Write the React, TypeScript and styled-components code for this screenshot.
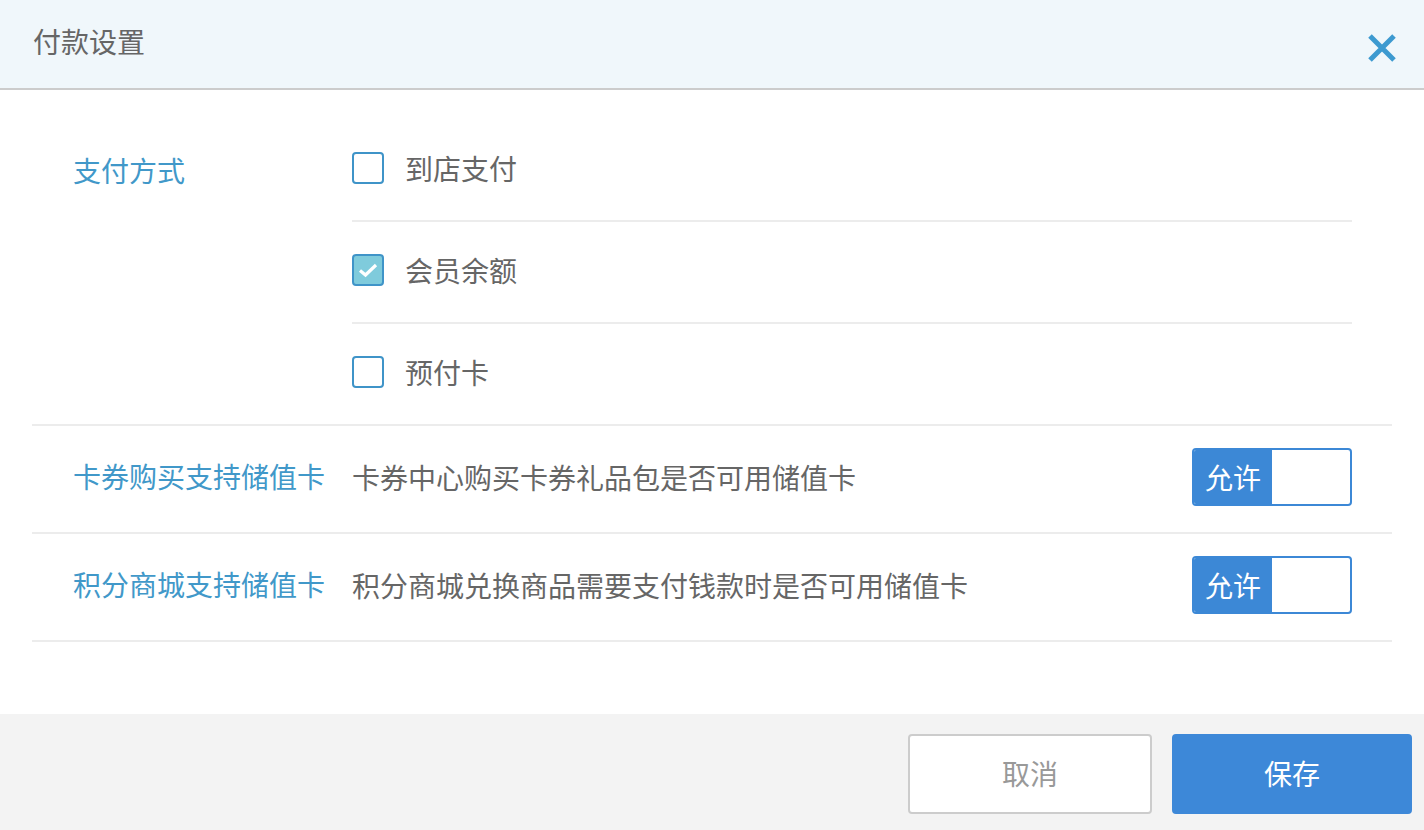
import styled, { createGlobalStyle } from 'styled-components';

const GlobalStyle = createGlobalStyle`
  html, body {
    margin: 0;
    padding: 0;
    background: #fff;
  }
  body {
    font-family: "Noto Sans CJK SC", "Noto Sans", sans-serif;
  }
  * {
    box-sizing: border-box;
  }
`;

const Modal = styled.div`
  display: flex;
  flex-direction: column;
  width: 1424px;
  height: 830px;
  background: #fff;
`;

const Header = styled.div`
  display: flex;
  align-items: center;
  justify-content: space-between;
  height: 90px;
  padding: 0 27px 7px 33px;
  background: #f0f7fb;
  border-bottom: 2px solid #cccccc;
`;

const Title = styled.h1`
  margin: 0;
  font-size: 28px;
  font-weight: 400;
  color: #666;
  line-height: 1;
`;

const CloseButton = styled.button`
  display: flex;
  padding: 0;
  border: 0;
  background: none;
  cursor: pointer;
  margin-top: 14px;
`;

const Body = styled.div`
  flex: 1;
  padding: 30px 32px 0;
`;

const Section = styled.div<{ $center?: boolean }>`
  display: flex;
  align-items: ${props => (props.$center ? 'center' : 'flex-start')};
  min-height: ${props => (props.$center ? '108px' : 'auto')};
  padding-bottom: ${props => (props.$center ? '4px' : '0')};
  border-bottom: 2px solid #ececec;
`;

const Label = styled.div<{ $offset?: number }>`
  width: 320px;
  flex-shrink: 0;
  padding-left: 41px;
  padding-top: ${props => props.$offset ?? 0}px;
  font-size: 28px;
  line-height: 1.4;
  color: #4198c9;
`;

const Options = styled.div`
  flex: 1;
  padding-right: 40px;
`;

const OptionRow = styled.label<{ $last?: boolean }>`
  display: flex;
  align-items: center;
  gap: 21px;
  height: ${props => (props.$last ? '100px' : '102px')};
  padding-bottom: 4px;
  border-bottom: ${props => (props.$last ? 'none' : '2px solid #ececec')};
  font-size: 28px;
  color: #666;
  cursor: pointer;
`;

const Box = styled.span<{ $checked?: boolean }>`
  display: flex;
  align-items: center;
  justify-content: center;
  width: 32px;
  height: 32px;
  border: 2px solid #3f94c8;
  border-radius: 4px;
  background: ${props => (props.$checked ? '#7fcbdc' : '#fff')};
`;

const Description = styled.div`
  flex: 1;
  font-size: 28px;
  color: #666;
`;

const Toggle = styled.div`
  display: flex;
  width: 160px;
  height: 58px;
  margin-right: 40px;
  border: 2px solid #3c88d6;
  border-radius: 4px;
  overflow: hidden;
  background: #fff;
`;

const ToggleOn = styled.span`
  display: flex;
  align-items: center;
  justify-content: center;
  width: 78px;
  background: #3c88d6;
  color: #fff;
  font-size: 28px;
`;

const Footer = styled.div`
  display: flex;
  justify-content: flex-end;
  align-items: flex-start;
  gap: 20px;
  height: 116px;
  padding: 20px 12px 0 0;
  background: #f3f3f3;
`;

const Button = styled.button<{ $primary?: boolean }>`
  width: ${props => (props.$primary ? '240px' : '244px')};
  height: 80px;
  padding-bottom: 3px;
  border: 2px solid ${props => (props.$primary ? '#3d88d8' : '#cccccc')};
  border-radius: 4px;
  background: ${props => (props.$primary ? '#3d88d8' : '#fff')};
  color: ${props => (props.$primary ? '#fff' : '#999')};
  font-family: "Noto Sans CJK SC", sans-serif;
  font-size: 28px;
  cursor: pointer;
`;

const payMethods = [
  { name: '到店支付', checked: false },
  { name: '会员余额', checked: true },
  { name: '预付卡', checked: false },
];

const cardRules = [
  { label: '卡券购买支持储值卡', desc: '卡券中心购买卡券礼品包是否可用储值卡' },
  { label: '积分商城支持储值卡', desc: '积分商城兑换商品需要支付钱款时是否可用储值卡' },
];

const App = (): JSX.Element => (
  <>
    <GlobalStyle />
    <Modal>
      <Header>
        <Title>付款设置</Title>
        <CloseButton aria-label="关闭">
          <svg width="30" height="30" viewBox="0 0 30 30">
            <path d="M3 3 L27 27 M27 3 L3 27" stroke="#3d9ad0" strokeWidth="5" strokeLinecap="butt" />
          </svg>
        </CloseButton>
      </Header>
      <Body>
        <Section>
          <Label $offset={31}>支付方式</Label>
          <Options>
            {payMethods.map((m, i) => (
              <OptionRow key={m.name} $last={i === payMethods.length - 1}>
                <Box $checked={m.checked}>
                  {m.checked && (
                    <svg width="20" height="16" viewBox="0 0 20 16">
                      <path d="M2 8.5 L7.5 13 L18 3" fill="none" stroke="#fff" strokeWidth="3.2" />
                    </svg>
                  )}
                </Box>
                {m.name}
              </OptionRow>
            ))}
          </Options>
        </Section>
        {cardRules.map(rule => (
          <Section key={rule.label} $center>
            <Label>{rule.label}</Label>
            <Description>{rule.desc}</Description>
            <Toggle>
              <ToggleOn>允许</ToggleOn>
            </Toggle>
          </Section>
        ))}
      </Body>
      <Footer>
        <Button>取消</Button>
        <Button $primary>保存</Button>
      </Footer>
    </Modal>
  </>
);

export default App;
